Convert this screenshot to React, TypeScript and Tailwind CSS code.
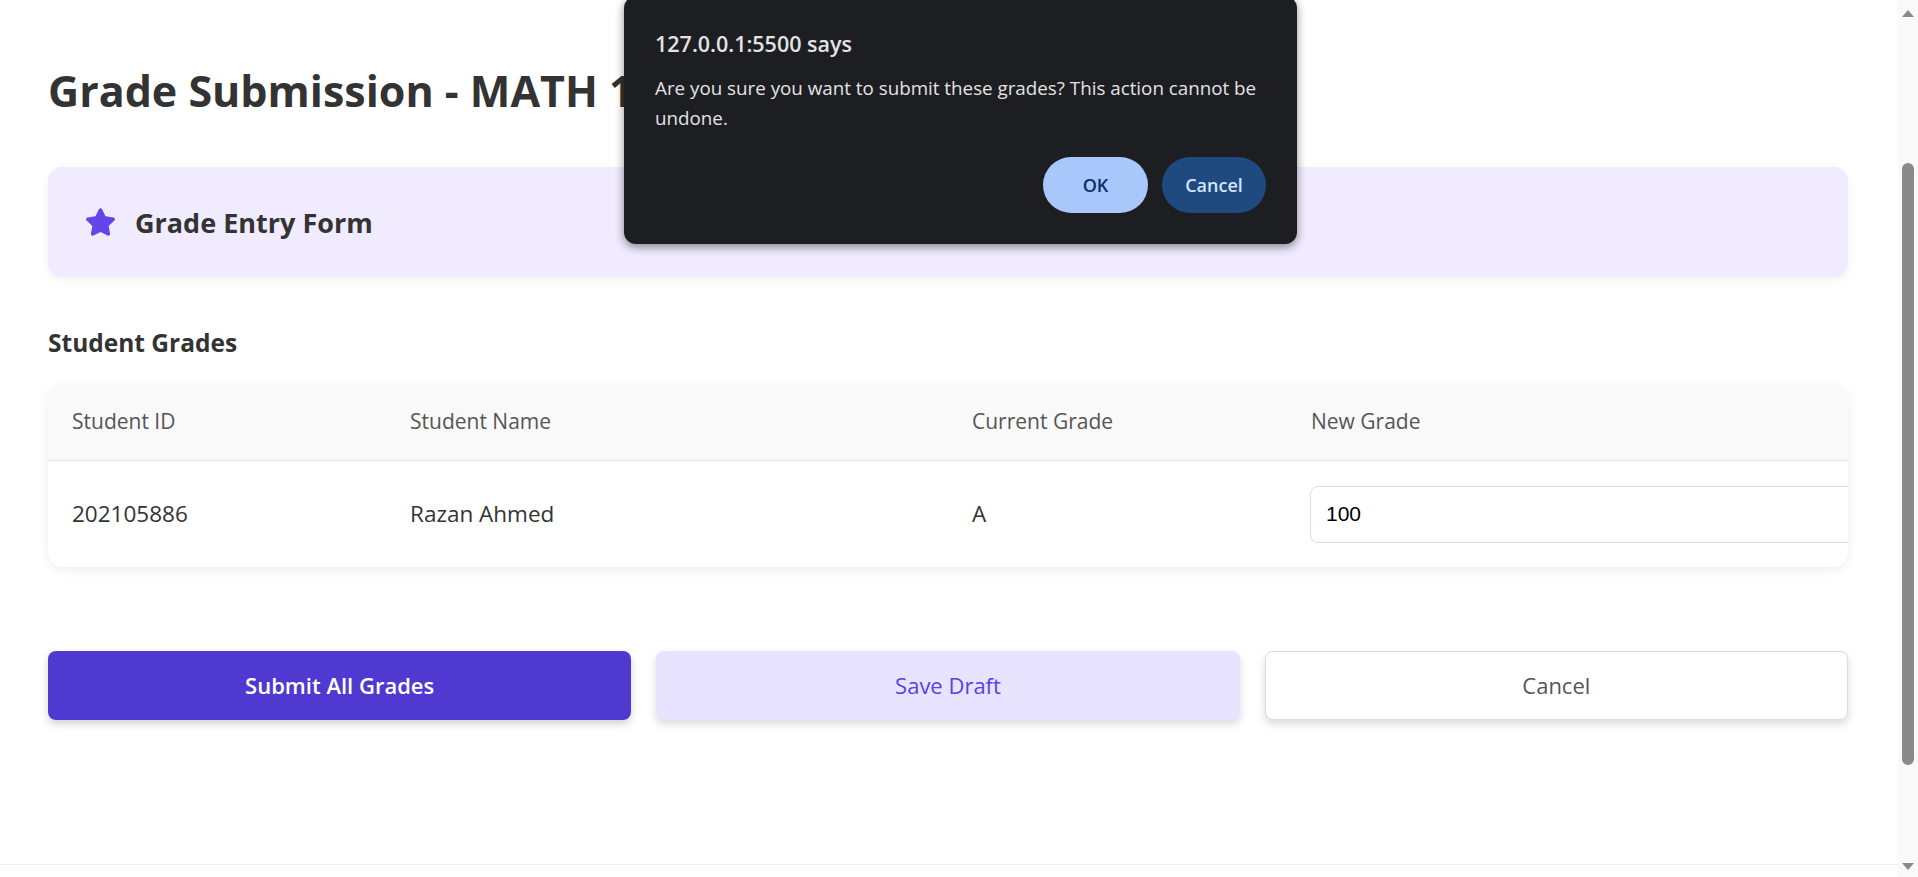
import { FaStar } from "react-icons/fa";

const columns = ["Student ID", "Student Name", "Current Grade", "New Grade"];

function Scrollbar() {
  return (
    <div className="flex h-full w-[20px] shrink-0 flex-col items-center bg-[#f9f9f9]">
      <div className="mt-[10px] h-0 w-0 border-x-[6px] border-b-[7px] border-x-transparent border-b-[#8a8a8a]" />
      <div className="mt-[146px] h-[602px] w-[12px] rounded-full bg-[#8a8a8a]" />
      <div className="mt-auto mb-[7px] h-0 w-0 border-x-[6px] border-t-[7px] border-x-transparent border-t-[#8a8a8a]" />
    </div>
  );
}

function ConfirmDialog() {
  return (
    <div className="absolute left-[624px] top-[-4px] w-[673px] rounded-[12px] bg-[#1d1e22] px-[31px] pt-[34px] pb-[31px] shadow-[0_3px_10px_rgba(0,0,0,0.45)]">
      <div className="text-[21.5px] font-semibold leading-[28px] text-[#e3e3e3]">127.0.0.1:5500 says</div>
      <p className="mt-[15px] whitespace-nowrap text-[18.8px] leading-[30px] text-[#e3e3e3]">
        Are you sure you want to submit these grades? This action cannot be
        <br />
        undone.
      </p>
      <div className="mt-[24px] flex justify-end gap-[14px]">
        <button className="h-[56px] w-[105px] rounded-full bg-[#a8c7fa] text-[18px] font-semibold text-[#062e6f]">
          OK
        </button>
        <button className="h-[56px] w-[104px] rounded-full bg-[#1f4a7f] text-[18px] font-semibold text-[#d3e3fd]">
          Cancel
        </button>
      </div>
    </div>
  );
}

export default function App() {
  return (
    <div className="relative flex h-[877px] w-full overflow-hidden bg-white font-['Open_Sans',sans-serif] text-[#333]">
      <main className="flex min-w-0 flex-1 flex-col">
        <div className="pl-[48px] pt-[65px]">
          <div className="w-[1800px]">
            <h1 className="text-[43px] font-bold leading-[52px]">Grade Submission - MATH 101</h1>

            {/* form header card */}
            <div className="mt-[50px] flex h-[110px] items-center gap-[19px] rounded-[14px] bg-[#f0ebff] pl-[37px] shadow-[0_3px_10px_rgba(0,0,0,0.06)]">
              <FaStar className="h-[28px] w-[31px] text-[#6246ea]" />
              <h2 className="text-[27px] font-bold leading-none">Grade Entry Form</h2>
            </div>

            <h3 className="mt-[50px] text-[24.5px] font-bold leading-[32px]">Student Grades</h3>

            {/* grades table */}
            <div className="mt-[25px] overflow-hidden rounded-[15px] bg-white shadow-[0_3px_12px_rgba(0,0,0,0.07)]">
              <div className="grid h-[77px] grid-cols-[338px_562px_339px_561px] items-center border-b border-[#e6e6e6] bg-[#f9f9f9]">
                {columns.map(c => (
                  <div key={c} className="pl-6 text-[21px] font-medium text-[#555]">
                    {c}
                  </div>
                ))}
              </div>
              <div className="grid h-[106px] grid-cols-[338px_562px_339px_561px] items-center text-[22.5px]">
                <div className="pl-6">202105886</div>
                <div className="pl-6">Razan Ahmed</div>
                <div className="pl-6">A</div>
                <div className="pl-[23px]">
                  <input
                    defaultValue="100"
                    className="h-[57px] w-[620px] rounded-[8px] border border-[#ddd] bg-white px-[15px] font-['Liberation_Sans',Arial,sans-serif] text-[21px] text-black outline-none"
                  />
                </div>
              </div>
            </div>

            {/* actions */}
            <div className="mt-[84px] grid grid-cols-3 gap-[25px]">
              <button className="h-[69px] rounded-[8px] bg-[#5039d1] text-[22px] font-semibold text-white shadow-[0_4px_8px_rgba(0,0,0,0.18)]">
                Submit All Grades
              </button>
              <button className="h-[69px] rounded-[8px] bg-[#e8e3fe] text-[22px] font-medium text-[#5a3fe6] shadow-[0_4px_8px_rgba(0,0,0,0.15)]">
                Save Draft
              </button>
              <button className="h-[69px] rounded-[8px] border border-[#ddd] bg-white text-[22px] font-medium text-[#555] shadow-[0_4px_8px_rgba(0,0,0,0.15)]">
                Cancel
              </button>
            </div>
          </div>
        </div>
        <footer className="mt-[144px] h-[40px] shrink-0 border-t border-[#eee]" />
      </main>
      <Scrollbar />
      <ConfirmDialog />
    </div>
  );
}
